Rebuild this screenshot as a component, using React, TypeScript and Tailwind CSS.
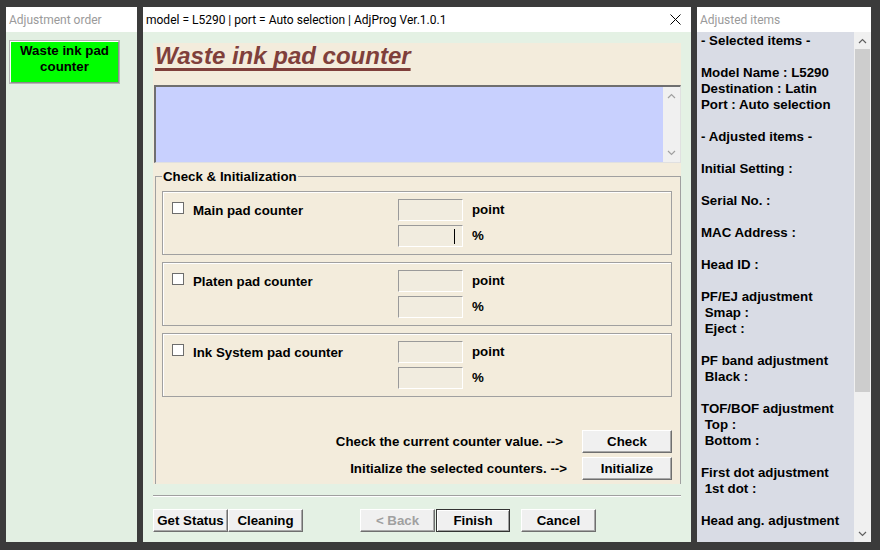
import React from 'react'

const raised =
  'bg-[#f0f0f0] border border-t-white border-l-white border-b-[#6f6f6f] border-r-[#6f6f6f] shadow-[inset_-1px_-1px_0_#a8a8a8]'
const btn = 'h-[23px] text-[13.3px] font-bold flex items-center justify-center'

const Chevron = ({ up, color = '#a0a0a0' }: { up?: boolean; color?: string }) => (
  <svg width="9" height="6" viewBox="0 0 9 6">
    <polyline
      points={up ? '1,5 4.5,1.5 8,5' : '1,1 4.5,4.5 8,1'}
      fill="none"
      stroke={color}
      strokeWidth="1.2"
    />
  </svg>
)

const Counter = ({ label, caret }: { label: string; caret?: boolean }) => (
  <div className="h-[64px] border border-[#a0a0a0] shadow-[inset_1px_1px_0_#ffffff] flex pt-[7px]">
    <div className="w-[235px] pl-[9px] pt-[3px] flex items-start gap-[9px]">
      <div className="w-[12px] h-[12px] bg-white border border-[#6d6d6d] shrink-0" />
      <span className="text-[13.3px] leading-[17px] font-bold">{label}</span>
    </div>
    <div className="flex flex-col gap-[4px]">
      <div className="flex items-center gap-[9px]">
        <div className="w-[65px] h-[22px] bg-[#f1ecdf] border border-t-[#9a9a9a] border-l-[#9a9a9a] border-b-white border-r-white" />
        <span className="text-[13.3px] font-bold">point</span>
      </div>
      <div className="flex items-center gap-[9px]">
        <div className="w-[65px] h-[22px] bg-[#f1ecdf] border border-t-[#9a9a9a] border-l-[#9a9a9a] border-b-white border-r-white flex items-center justify-end pr-[7px]">
          {caret && <div className="w-px h-[15px] bg-black" />}
        </div>
        <span className="text-[13.3px] font-bold">%</span>
      </div>
    </div>
  </div>
)

const adjusted = [
  '- Selected items -',
  '',
  'Model Name : L5290',
  'Destination : Latin',
  'Port : Auto selection',
  '',
  '- Adjusted items -',
  '',
  'Initial Setting :',
  '',
  'Serial No. :',
  '',
  'MAC Address :',
  '',
  'Head ID :',
  '',
  'PF/EJ adjustment',
  '\u00a0Smap :',
  '\u00a0Eject :',
  '',
  'PF band adjustment',
  '\u00a0Black :',
  '',
  'TOF/BOF adjustment',
  '\u00a0Top :',
  '\u00a0Bottom :',
  '',
  'First dot adjustment',
  '\u00a01st dot :',
  '',
  'Head ang. adjustment',
  '',
]

export default function App() {
  return (
    <div className="w-[880px] h-[550px] bg-[#3b3b3b] flex gap-[6px] pt-[7px] pl-[6px] overflow-hidden text-black font-['Liberation_Sans',Arial,sans-serif]">
      {/* Adjustment order */}
      <div className="w-[131px] h-[535px] flex flex-col">
        <div className="h-[25px] bg-white px-[3px] flex items-center text-[12px] text-[#9a9a9a] font-['Roboto',sans-serif]">
          Adjustment order
        </div>
        <div className="flex-1 bg-[#e2efe2] pt-[9px] pl-[4px]">
          <div className="w-[109px] h-[42px] bg-[#00ff00] border border-t-white border-l-white border-b-[#8a8a8a] border-r-[#8a8a8a] shadow-[0_0_0_1px_#b4b4b4] pt-[1px] text-[13.3px] leading-[16px] font-bold text-center">
            Waste ink pad
            <br />
            counter
          </div>
        </div>
      </div>

      {/* Main window */}
      <div className="w-[548px] h-[535px] flex flex-col">
        <div className="h-[25px] bg-white pl-[3px] pr-[10px] flex items-center justify-between text-[12px] font-['Roboto',sans-serif]">
          <span>model = L5290 | port = Auto selection | AdjProg Ver.1.0.1</span>
          <svg width="11" height="11" viewBox="0 0 11 11">
            <path d="M0.5 0.5L10.5 10.5M10.5 0.5L0.5 10.5" stroke="#000" strokeWidth="1" />
          </svg>
        </div>
        <div className="flex-1 bg-[#e4f1e4] px-[10px] pt-[11px] flex flex-col">
          <div className="h-[441px] bg-[#f3ecdc] overflow-hidden flex flex-col">
            <div className="h-[42px] pl-[2px] pt-[1px] text-[24px] leading-[24px] font-bold italic text-[#7f3f3b] underline decoration-[3px] underline-offset-[4px] [text-decoration-skip-ink:none]">
              Waste ink pad counter
            </div>
            <div className="ml-[1px] h-[78px] bg-[#c8d0fe] border-t-2 border-l-2 border-[#6f6f6f] border-b border-r border-b-[#e0e0e0] border-r-[#e0e0e0] flex justify-end">
              <div className="w-[17px] bg-[#f0f0f0] flex flex-col items-center justify-between py-[6px]">
                <Chevron up />
                <Chevron />
              </div>
            </div>
            <fieldset className="mt-[6px] ml-[2px] flex-1 border border-b-0 border-[#a0a0a0] pl-[6px] pr-[8px] pt-[7px] min-h-0">
              <legend className="px-[1px] text-[13.3px] leading-[15px] font-bold">Check &amp; Initialization</legend>
              <div className="flex flex-col gap-[7px]">
                <Counter label="Main pad counter" caret />
                <Counter label="Platen pad counter" />
                <Counter label="Ink System pad counter" />
              </div>
              <div className="mt-[33px] flex flex-col gap-[4px]">
                <div className="flex items-center justify-end">
                  <span className="text-[13.3px] font-bold mr-[19px]">Check the current counter value. --&gt;</span>
                  <div className={`${raised} ${btn} w-[90px] h-[22px]`}>Check</div>
                </div>
                <div className="flex items-center justify-end">
                  <span className="text-[13.3px] font-bold mr-[15px]">Initialize the selected counters. --&gt;</span>
                  <div className={`${raised} ${btn} w-[90px] h-[22px]`}>Initialize</div>
                </div>
              </div>
            </fieldset>
          </div>
          <div className="mt-[11px] h-[2px] border-t border-[#a0a0a0] border-b border-b-white" />
          <div className="mt-[12px] flex">
            <div className={`${raised} ${btn} w-[75px]`}>Get Status</div>
            <div className={`${raised} ${btn} w-[75px]`}>Cleaning</div>
            <div className={`${raised} ${btn} w-[75px] ml-[57px] text-[#a0a0a0]`}>&lt; Back</div>
            <div className={`${btn} w-[74px] ml-[1px] bg-[#f0f0f0] border border-[#333333] shadow-[inset_1px_1px_0_#ffffff,inset_-1px_-1px_0_#a0a0a0]`}>
              Finish
            </div>
            <div className={`${raised} ${btn} w-[75px] ml-[11px]`}>Cancel</div>
          </div>
        </div>
      </div>

      {/* Adjusted items */}
      <div className="w-[174px] h-[535px] flex flex-col">
        <div className="h-[25px] bg-white px-[3px] flex items-center text-[12px] text-[#9a9a9a] font-['Roboto',sans-serif]">
          Adjusted items
        </div>
        <div className="flex-1 flex min-h-0">
          <div className="flex-1 bg-[#d9dce5] pl-[4px] pt-[1px] overflow-hidden">
            {adjusted.map((line, i) => (
              <div key={i} className="h-[16px] text-[13.3px] leading-[16px] font-bold whitespace-pre">
                {line}
              </div>
            ))}
          </div>
          <div className="w-[17px] bg-[#f0f0f0] flex flex-col">
            <div className="h-[17px] flex items-center justify-center">
              <Chevron up color="#606060" />
            </div>
            <div className="h-[343px] mx-[1px] bg-[#cdcdcd]" />
            <div className="flex-1" />
            <div className="h-[17px] flex items-center justify-center">
              <Chevron color="#606060" />
            </div>
          </div>
        </div>
      </div>
    </div>
  )
}
